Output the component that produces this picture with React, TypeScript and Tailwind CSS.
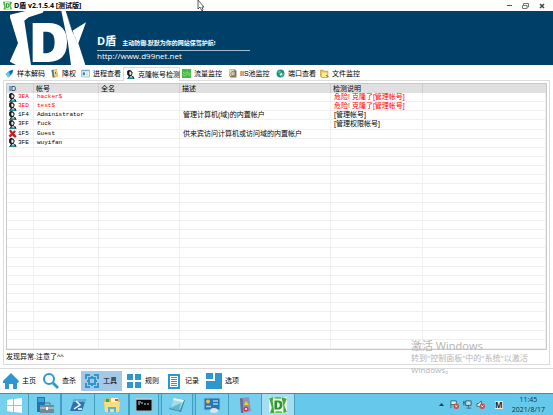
import React from "react";

const sim = "font-['Liberation_Sans','Noto_Sans_CJK_SC',sans-serif]";
const ui = "font-['Open_Sans','Noto_Sans_CJK_SC',sans-serif]";

type IconProps = { className?: string };

function MiniLogo({ className = "" }: IconProps) {
  return (
    <svg viewBox="0 0 20 18" className={className} aria-hidden="true">
      <rect width="20" height="18" fill="#f3faf0" />
      <path d="M0 1L5 0L4 4L6 18L1 18L3 12Z" fill="#43aa3e" />
      <path d="M14 0L20 2L17 9L20 17L16 18L16 10Z" fill="#43aa3e" />
      <path fillRule="evenodd" d="M6 4h4q5 0 5 5t-5 5H6zM9 6v6h1q2 0 2-3t-2-3z" fill="#279527" />
      <path d="M6 0h7l1 2H6zM7 16h7l1 2H7z" fill="#62bd58" />
    </svg>
  );
}

function BannerLogo() {
  return (
    <svg viewBox="30 33 240 162" className="h-[54px] w-20 shrink-0" fill="#fff" aria-label="D盾">
      <path d="M28 45L76 33H131L128 38L86 52L73 62L93 195H48L29 185L54 130Z" />
      <path fillRule="evenodd" d="M98 69H145Q201 70 201 127Q201 185 145 186H98ZM130 95V160H141Q164 158 164 127Q164 96 141 95Z" />
      <path d="M184 33H197L217 92L258 67L235 130L256 195H213L204 130Z" />
      <path d="M199 42L232 130L226 112L216 93Z" fill="#003f68" />
    </svg>
  );
}

function UserIcon({ className = "size-[9px]" }: IconProps) {
  return (
    <svg viewBox="0 0 16 16" className={className} aria-hidden="true">
      <path d="M2 2Q5 -1 9 1L12 5L10 10L14 12L15 16H2L5 11L2 8Z" fill="#181818" />
      <path d="M6 3L9 3L10 7L8 9L6 8Z" fill="#f2f4f4" />
      <path d="M3 16L7 11L12 12L14 16Z" fill="#238c91" />
      <path d="M7 11L9 14L11 11Z" fill="#fff" />
    </svg>
  );
}

function CrossIcon() {
  return (
    <svg viewBox="0 0 16 16" className="size-[9px]" aria-hidden="true">
      <path d="M2 3L5 1L8 5L12 2L14 4L11 8L15 13L12 15L8 11L4 15L1 12L5 8Z" fill="#c71f24" />
      <path d="M8 11L12 15L15 13" stroke="#481010" fill="none" />
    </svg>
  );
}

function TabIcon({ kind }: { kind: string }) {
  if (kind === "user") return <UserIcon className="size-[9px] shrink-0" />;
  return (
    <svg viewBox="0 0 16 16" className="size-[9px] shrink-0" aria-hidden="true">
      {kind === "decode" && (
        <>
          <path d="M1 9L8 3L15 1L13 8L6 15Z" fill="#1684bd" />
          <path d="M1 9L6 5L9 10L6 15Z" fill="#75c6e7" />
          <path d="M9 4L13 3L12 7Z" fill="#0b4b7c" />
        </>
      )}
      {kind === "privilege" && (
        <>
          <path d="M2 2L12 0L15 13L5 16Z" fill="#e5b63b" />
          <path d="M4 4L11 2L13 11L6 13Z" fill="#fff1a0" />
          <path d="M3 2L6 1L8 14L5 15Z" fill="#367bb2" />
          <path d="M9 5L11 10" stroke="#bd531d" strokeWidth="2" />
        </>
      )}
      {kind === "process" && (
        <>
          <path d="M1 2H15V14H1Z" fill="#f5fafc" stroke="#73929d" />
          <path d="M1 2H15V4H1Z" fill="#77a6bf" />
          <path d="M3 6H7V11H3Z" fill="#198bb6" />
          <path d="M9 7H13M9 10H13" stroke="#96b3bd" />
        </>
      )}
      {kind === "traffic" && (
        <>
          <path d="M0 0H16V16H0Z" fill="#44bb46" />
          <path d="M1 5L5 8L9 5L15 9M1 10L5 12L10 9L15 12" stroke="#9be88f" strokeWidth="1.2" fill="none" />
        </>
      )}
      {kind === "iis" && (
        <>
          <path d="M3 1H13L15 4V15H5L2 12Z" fill="#8a7958" />
          <path d="M3 2H11V12H3Z" fill="#f3e7b7" />
          <circle cx="9" cy="8" r="4" fill="#d6d2c4" stroke="#574c3b" />
          <path d="M9 5V8H12" stroke="#b88a22" fill="none" />
        </>
      )}
      {kind === "port" && (
        <>
          <circle cx="8" cy="8" r="7" fill="#178e91" />
          <path d="M3 4L7 2L9 5L7 8L3 7ZM9 9L14 7L12 13L9 14Z" fill="#58c657" />
          <path d="M6 10L10 6L11 9L8 12Z" fill="#fff" />
        </>
      )}
      {kind === "file" && (
        <>
          <path d="M1 2H6L8 4H14V15H3L1 13Z" fill="#eac13e" stroke="#ad8528" />
          <path d="M3 6H13V14H4Z" fill="#ffed91" />
          <path d="M11 11L15 14" stroke="#737373" strokeWidth="2" />
        </>
      )}
    </svg>
  );
}

const tabs = [
  { label: "样本解码", icon: "decode", width: "w-[45px]" },
  { label: "降权", icon: "privilege", width: "w-[31px]" },
  { label: "进程查看", icon: "process", width: "w-[44px]" },
  { label: "克隆帐号检测", icon: "user", width: "w-[57px]" },
  { label: "流量监控", icon: "traffic", width: "w-[46px]" },
  { label: "IIS池监控", icon: "iis", width: "w-12" },
  { label: "端口查看", icon: "port", width: "w-[44px]" },
  { label: "文件监控", icon: "file", width: "w-[45px]" },
];

const accounts = [
  { id: "3EA", name: "hacker$", desc: "", note: "危险! 克隆了[管理帐号]", danger: true },
  { id: "3ED", name: "test$", desc: "", note: "危险! 克隆了[管理帐号]", danger: true },
  { id: "1F4", name: "Administrator", desc: "管理计算机(域)的内置帐户", note: "[管理帐号]" },
  { id: "3FF", name: "fuck", desc: "", note: "[管理权限帐号]" },
  { id: "1F5", name: "Guest", desc: "供来宾访问计算机或访问域的内置帐户", note: "", disabled: true },
  { id: "3FE", name: "wuyifan", desc: "", note: "" },
];
const emptyRows = Array.from({ length: 22 }, (_, i) => i);

function NavIcon({ kind }: { kind: string }) {
  return (
    <svg viewBox="0 0 16 16" className="size-4 shrink-0" fill="#3097ce" aria-hidden="true">
      {kind === "home" && <path d="M8 0L16 8L15 10H14V16H10V11H6V16H2V10H0V8Z" />}
      {kind === "search" && (
        <>
          <circle cx="6" cy="6" r="5" fill="none" stroke="#3097ce" strokeWidth="2" />
          <path d="M9 11L11 9L16 14L14 16Z" />
        </>
      )}
      {kind === "tools" && (
        <>
          <path d="M1 1H6V3H3V6H1ZM10 1H15V6H13V3H10ZM1 10H3V13H6V15H1ZM13 10H15V15H10V13H13Z" />
          <path fillRule="evenodd" d="M4 4H7V3H9V4H12V7H13V9H12V12H9V13H7V12H4V9H3V7H4ZM6 6V10H10V6Z" />
        </>
      )}
      {kind === "rules" && <path d="M1 1H7V7H1ZM9 1H15V7H9ZM1 9H7V15H1ZM9 9H15V15H9Z" />}
      {kind === "log" && (
        <>
          <path d="M2 1H14V16H2Z" />
          <path d="M4 3H12V14H4Z" fill="#fff" />
          <path d="M5 4.500H11M5 6.500H11M5 8.500H11M5 10.500H11M5 12.500H11" stroke="#3097ce" />
        </>
      )}
      {kind === "options" && <path d="M0 0H7V6H0ZM9 0H16V16H0V8H9Z" />}
    </svg>
  );
}

const nav = [
  { label: "主页", icon: "home", width: "w-10" },
  { label: "查杀", icon: "search", width: "w-[38px]" },
  { label: "工具", icon: "tools", width: "w-[41px]" },
  { label: "规则", icon: "rules", width: "w-10" },
  { label: "记录", icon: "log", width: "w-10" },
  { label: "选项", icon: "options", width: "w-10" },
];

function TaskIcon({ kind }: { kind: string }) {
  if (kind === "dshield") return <MiniLogo className="h-4 w-[18px]" />;
  return (
    <svg viewBox="0 0 18 16" className="h-4 w-[18px]" aria-hidden="true">
      {kind === "start" && <path d="M2 3L8 2V8H2ZM9 2L17 1V8H9ZM2 9H8V15L2 14ZM9 9H17V16L9 15Z" fill="#fff" />}
      {kind === "server" && (
        <>
          <path d="M1 0H9V15H1Z" fill="#1779b9" />
          <path d="M2 2H8M2 4H8" stroke="#77c6ed" />
          <path d="M8 8V6H14V8" fill="none" stroke="#566f7e" />
          <path d="M4 8H18V16H4Z" fill="#718b99" />
          <path d="M4 11H18" stroke="#d8e3e8" />
          <path d="M10 10H12V13H10Z" fill="#fff" />
        </>
      )}
      {kind === "powershell" && (
        <>
          <path d="M5 2H17L13 14H1Z" fill="#2c74ad" />
          <path d="M5 2H17L16 5H4Z" fill="#69add7" />
          <path d="M7 4L11 8L5 12M9 12H13" fill="none" stroke="#fff" strokeWidth="1.5" />
        </>
      )}
      {kind === "explorer" && (
        <>
          <path d="M1 2L7 1L9 3H16V13H2Z" fill="#dfb64b" />
          <path d="M3 2H6V5H3Z" fill="#43a153" />
          <path d="M8 1H15V5H8Z" fill="#fff6d0" />
          <path d="M12 2H15V4H12Z" fill="#dc573f" />
          <path d="M1 5H17L16 15H2Z" fill="#f9dd82" />
          <path d="M5 15V10H13V15H11V12H7V15Z" fill="#5bb4dc" />
        </>
      )}
      {kind === "cmd" && (
        <>
          <path d="M1 2H17V14H1Z" fill="#080808" stroke="#aab4b9" />
          <path d="M1 2H17" stroke="#d7dcde" />
          <path d="M3 5H6M3 7H5M7 5V7M9 7H11M12 7H14" stroke="#d8d8d8" />
        </>
      )}
      {kind === "notepad" && (
        <>
          <path d="M7 1L17 3L13 15L1 12Z" fill="#368eac" />
          <path d="M6 1L16 3L12 13L2 11Z" fill="#9eddea" />
          <path d="M6 1L16 3L15 5L5 3Z" fill="#e5f5f4" />
          <path d="M2 11L13 6L11 14Z" fill="#66b6cb" />
        </>
      )}
      {kind === "control" && (
        <>
          <path d="M1 1H17V13H1Z" fill="#2777b5" stroke="#7fbfe2" />
          <circle cx="5" cy="4.500" r="2" fill="#f5bd3e" />
          <path d="M10 4H15M10 7H15M3 9.500H8" stroke="#9fd2ef" strokeWidth="1.3" />
          <ellipse cx="11" cy="13.500" rx="4" ry="2.500" fill="#dce5e8" />
        </>
      )}
      {kind === "security" && (
        <>
          <path d="M4 1L13 0L15 14L5 16Z" fill="#8a95b6" />
          <path d="M4 1L7 2V16L5 16Z" fill="#626d91" />
          <path d="M8 8L10 4L13 8Z" fill="#f6cf2a" />
          <circle cx="10" cy="12" r="2.500" fill="#dc3449" />
          <path d="M9 11L11 13M11 11L9 13" stroke="#fff" strokeWidth="0.8" />
        </>
      )}
    </svg>
  );
}

const tasks = [
  { kind: "start", label: "开始", style: "w-[29px] border-r bg-[#76d0ed]" },
  { kind: "server", label: "服务器管理器", style: "w-8 border-r bg-[#76d0ed]" },
  { kind: "powershell", label: "PowerShell", style: "w-[34px] border-x bg-[#76d0ed]" },
  { kind: "explorer", label: "文件资源管理器", style: "w-[34px] border-r bg-[#76d0ed]" },
  { kind: "cmd", label: "命令提示符", style: "w-[30px] border-x bg-[#76d0ed]" },
  { kind: "notepad", label: "记事本", style: "ml-0.5 w-8 border-x bg-[#76d0ed]" },
  { kind: "control", label: "控制面板", style: "ml-0.5 w-[34px] border-x bg-[#76d0ed]" },
  { kind: "security", label: "安全", style: "w-[33px] border-r bg-[#76d0ed]" },
  { kind: "dshield", label: "D盾", style: "w-[33px] border-r bg-[#a5def3]" },
];

function Tray() {
  return (
    <div className="flex items-center gap-1">
      <svg viewBox="0 0 5 3" className="mr-0.5 h-[3px] w-[5px]" aria-hidden="true"><path d="M0 3L2.500 0L5 3Z" fill="#163744" /></svg>
      <svg viewBox="0 0 10 10" className="size-[9px]" aria-hidden="true">
        <path d="M1 1V9M1 1H7V5H1" fill="#d7eff8" stroke="#3d6473" />
        <circle cx="7" cy="7" r="3" fill="#d74743" /><path d="M6 6L8 8M8 6L6 8" stroke="#fff" />
      </svg>
      <svg viewBox="0 0 10 10" className="size-[9px]" aria-hidden="true">
        <path d="M3 1H9V6H3ZM6 6V8M4 9H9M1 1V6M0 3H2" fill="#b3e3f3" stroke="#31596a" />
      </svg>
      <svg viewBox="0 0 10 10" className="size-[9px]" aria-hidden="true">
        <path d="M1 4H3L6 1V9L3 7H1Z" fill="#e6f5f9" stroke="#40606c" />
        <circle cx="7" cy="7" r="3" fill="#d74743" /><path d="M6 6L8 8M8 6L6 8" stroke="#fff" />
      </svg>
      <span className="ml-1.5 flex size-2 items-center justify-center bg-[#e8e8e8] text-[8px] leading-[8px] font-bold text-[#222]">M</span>
    </div>
  );
}

function Pointer() {
  return (
    <svg viewBox="0 0 8 12" className="absolute top-0 left-[197px] h-3 w-2" aria-hidden="true">
      <path d="M1 0V9L3 7L5 11L6 10L5 7H7Z" fill="#fff" stroke="#333" strokeWidth="0.8" />
    </svg>
  );
}

export default function App() {
  const line = "border-r border-b border-[#efefef] p-0";
  const cell = `${line} pl-[3px] whitespace-nowrap`;
  const code = "font-['Liberation_Mono',monospace] text-[6px]";
  const head = "border-r border-[#cdcdcd] p-0 pl-0.5 text-left font-normal";
  return (
    <div className={`relative flex h-screen flex-col overflow-hidden bg-white text-[7px] leading-[8px] text-black ${sim}`}>
      <header className={`flex h-[11px] shrink-0 items-center pr-2 pl-[3px] ${ui}`}>
        <MiniLogo className="h-[9px] w-[9px]" />
        <h1 className="ml-0.5 text-[7px] font-bold">D盾 v2.1.5.4 [测试版]</h1>
        <div className="ml-auto flex items-center gap-2.5">
          <button aria-label="最小化" className="flex h-2 w-[5px] items-center"><span className="h-px w-full bg-[#555]" /></button>
          <button aria-label="还原">
            <svg viewBox="0 0 7 6" className="h-1.5 w-[7px]" fill="none" stroke="#777"><path d="M1.500 2V.5H6.500V4H5M.5 2.500H5V5.500H.5Z" /></svg>
          </button>
          <button aria-label="关闭">
            <svg viewBox="0 0 6 6" className="h-1.5 w-1.5" stroke="#444" strokeWidth="1.5"><path d="M1 1L5 5M5 1L1 5" /></svg>
          </button>
        </div>
      </header>

      <div className={`flex h-[54px] shrink-0 bg-[#003f68] pl-2.5 text-white ${ui}`}>
        <BannerLogo />
        <div className="ml-[7px] flex w-[153px] flex-col pt-[23px]">
          <div className="flex items-center gap-1.5 border-b border-[#a6bdcc] pb-0.5">
            <strong className="text-[11px] leading-[14px]">D盾</strong>
            <span className="pt-1 text-[6px] font-bold whitespace-nowrap">主动防御.默默为你的网站保驾护航!</span>
          </div>
          <a href="#home" className="text-[8px] leading-[9px]">http://www.d99net.net</a>
        </div>
      </div>

      <main className="flex min-h-0 flex-1 flex-col px-[3px] pt-0.5 pb-[3px]">
        <nav className="flex h-[13px] shrink-0" aria-label="工具">
          {tabs.map((t, i) => (
            <button
              key={t.label}
              aria-pressed={i === 3}
              className={`flex shrink-0 items-center gap-[3px] pl-0.5 whitespace-nowrap ${t.width} ${
                i === 3 ? "relative -mb-px border border-b-0 border-[#dcdcdc] bg-white" : ""
              }`}
            >
              <TabIcon kind={t.icon} />
              <span>{t.label}</span>
            </button>
          ))}
        </nav>
        <section className="flex min-h-0 flex-1 flex-col border border-[#dcdcdc] px-0.5 pt-0.5">
          <div className="min-h-0 flex-1 border border-[#c8c8c8]">
            <table className="h-full w-full table-fixed border-separate border-spacing-0 leading-[8px]">
              <colgroup>
                <col className="w-[27px]" />
                <col className="w-[65px]" />
                <col className="w-[81px]" />
                <col className="w-[151px]" />
                <col className="w-[92px]" />
                <col />
              </colgroup>
              <thead>
                <tr className="h-[9px] bg-[#e0e0e0]">
                  <th className={head}>ID</th>
                  <th className={head}>帐号</th>
                  <th className={head}>全名</th>
                  <th className={head}>描述</th>
                  <th className={head}>检测说明</th>
                  <th className="p-0" />
                </tr>
              </thead>
              <tbody>
                {accounts.map((a) => (
                  <tr key={a.id} className={`h-[9px] ${a.danger ? "text-[#ff0000]" : ""}`}>
                    <td className={`${line} pl-px`}>
                      <div className="flex h-2 items-center gap-px">
                        {a.disabled ? <CrossIcon /> : <UserIcon />}
                        <span className={code}>{a.id}</span>
                      </div>
                    </td>
                    <td className={`${cell} ${code}`}>{a.name}</td>
                    <td className={cell} />
                    <td className={cell}>{a.desc}</td>
                    <td className={cell}>{a.note}</td>
                    <td className={cell} />
                  </tr>
                ))}
                {emptyRows.map((r) => (
                  <tr key={r} className="h-[9px]">
                    <td className={cell} />
                    <td className={cell} />
                    <td className={cell} />
                    <td className={cell} />
                    <td className={cell} />
                    <td className={cell} />
                  </tr>
                ))}
              </tbody>
            </table>
          </div>
          <p role="status" className="h-[14px] pt-0.5 leading-[10px]">发现异常.注意了^^</p>
        </section>
      </main>

      <footer className="shrink-0">
        <nav className="flex h-[25px] items-center border-t border-[#dadada] pl-[3px]" aria-label="主导航">
          {nav.map((n, i) => (
            <button
              key={n.label}
              aria-pressed={i === 2}
              className={`flex h-5 items-center gap-[3px] whitespace-nowrap ${n.width} ${i === 2 ? "mr-1 bg-[#a5c8e7] pl-[3px]" : ""}`}
            >
              <NavIcon kind={n.icon} />
              <span>{n.label}</span>
            </button>
          ))}
        </nav>
        <div className={`flex h-[22px] items-stretch border-t border-[#6f7f86] bg-[#66c9eb] ${ui}`}>
          {tasks.map((t) => (
            <button key={t.kind} aria-label={t.label} className={`flex items-center justify-center border-[#459dbc] ${t.style}`}>
              <TaskIcon kind={t.kind} />
            </button>
          ))}
          <div className="ml-auto flex items-center gap-[9px] pr-2 text-[#17323c]">
            <Tray />
            <time className="text-center text-[7px] leading-[10px]">11:45<br />2021/8/17</time>
          </div>
        </div>
      </footer>

      <aside className={`pointer-events-none absolute right-5 bottom-[39px] w-[122px] text-[8px] leading-[12px] text-[#b5b5b5] ${ui}`}>
        <p className="text-[11px]">激活 Windows</p>
        <p className="whitespace-nowrap">转到"控制面板"中的"系统"以激活</p>
        <p>Windows。</p>
      </aside>
      <Pointer />
    </div>
  );
}
